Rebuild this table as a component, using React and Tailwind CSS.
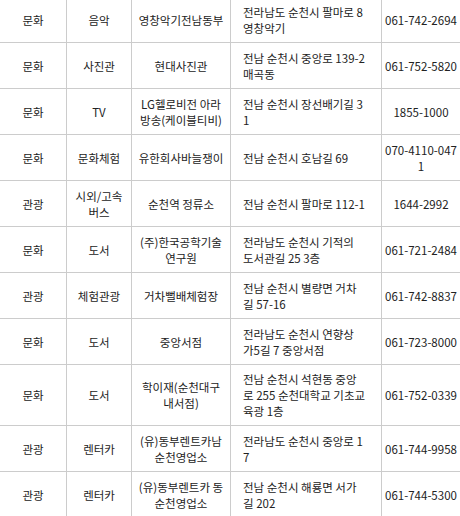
import React from 'react';

const rows = [
  ['문화', ['음악'], ['영창악기전남동부'], ['전라남도 순천시 팔마로 8', '영창악기'], ['061-742-2694']],
  ['문화', ['사진관'], ['현대사진관'], ['전남 순천시 중앙로 139-2', '매곡동'], ['061-752-5820']],
  ['문화', ['TV'], ['LG헬로비전 아라', '방송(케이블티비)'], ['전남 순천시 장선배기길 3', '1'], ['1855-1000']],
  ['문화', ['문화체험'], ['유한회사바늘쟁이'], ['전남 순천시 호남길 69'], ['070-4110-047', '1']],
  ['관광', ['시외/고속', '버스'], ['순천역 정류소'], ['전남 순천시 팔마로 112-1'], ['1644-2992']],
  ['문화', ['도서'], ['(주)한국공학기술', '연구원'], ['전라남도 순천시 기적의', '도서관길 25 3층'], ['061-721-2484']],
  ['관광', ['체험관광'], ['거차뻘배체험장'], ['전남 순천시 별량면 거차', '길 57-16'], ['061-742-8837']],
  ['문화', ['도서'], ['중앙서점'], ['전라남도 순천시 연향상', '가5길 7 중앙서점'], ['061-723-8000']],
  ['문화', ['도서'], ['학이재(순천대구', '내서점)'], ['전남 순천시 석현동 중앙', '로 255 순천대학교 기초교', '육광 1층'], ['061-752-0339']],
  ['관광', ['렌터카'], ['(유)동부렌트카남', '순천영업소'], ['전라남도 순천시 중앙로 1', '7'], ['061-744-9958']],
  ['관광', ['렌터카'], ['(유)동부렌트카 동', '순천영업소'], ['전남 순천시 해룡면 서가', '길 202'], ['061-744-5300']],
];

function Lines({ lines }) {
  return lines.map((l, i) => (
    <React.Fragment key={i}>
      {i > 0 && <br />}
      {l}
    </React.Fragment>
  ));
}

export default function App() {
  return (
    <div className="h-[516px] w-[460px] overflow-hidden bg-white">
      <div
        className="-mt-[4px] grid grid-cols-[67px_65px_99px_151px_1fr] border-t border-[#cccccc] text-[11.5px] leading-[16px] text-[#222222]"
        style={{ fontFamily: '"Noto Sans CJK KR", "Noto Sans", sans-serif' }}
      >
        {rows.map((r, i) => (
          <React.Fragment key={i}>
            <div className="flex min-h-[46px] items-center justify-center border-b border-r border-[#cccccc] py-[6px] text-center">
              {r[0]}
            </div>
            <div className="flex items-center justify-center border-b border-r border-[#cccccc] py-[6px] text-center">
              <div><Lines lines={r[1]} /></div>
            </div>
            <div className="flex items-center justify-center border-b border-r border-[#cccccc] py-[6px] text-center">
              <div className="whitespace-nowrap"><Lines lines={r[2]} /></div>
            </div>
            <div className="flex items-center border-b border-r border-[#cccccc] py-[6px] pl-3 pr-1">
              <div className="whitespace-nowrap"><Lines lines={r[3]} /></div>
            </div>
            <div className="flex items-center justify-center border-b border-[#cccccc] py-[6px] text-center">
              <div className="whitespace-nowrap"><Lines lines={r[4]} /></div>
            </div>
          </React.Fragment>
        ))}
      </div>
    </div>
  );
}
